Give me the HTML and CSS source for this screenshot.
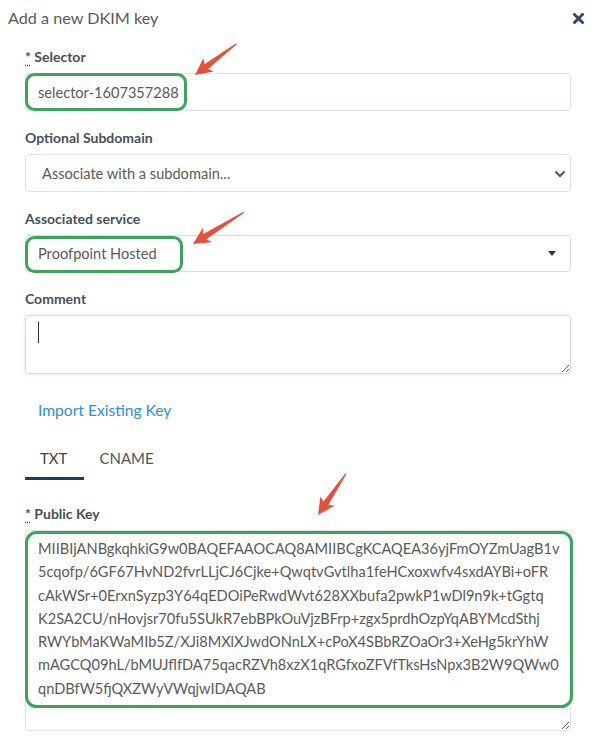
FILE: index.html
```html
<!DOCTYPE html>
<html lang="en">
<head>
<meta charset="utf-8">
<title>Add a new DKIM key</title>
<link rel="stylesheet" href="styles.css">
</head>
<body>
<div class="modal">
  <div class="modal-header">
    <h4 class="modal-title">Add a new DKIM key</h4>
    <button class="close" type="button" aria-label="Close">
      <svg width="11" height="11" viewBox="0 0 11 11"><path d="M1.5 1.5 L9.5 9.5 M9.5 1.5 L1.5 9.5" stroke="#34495e" stroke-width="2.8" stroke-linecap="square"/></svg>
    </button>
  </div>
  <form class="modal-body">
    <div class="field">
      <label class="label"><abbr title="required">*</abbr> Selector</label>
      <input class="control" type="text" value="selector-1607357288">
    </div>
    <div class="field">
      <label class="label">Optional Subdomain</label>
      <div class="select-wrap">
        <select class="control select">
          <option>Associate with a subdomain...</option>
        </select>
        <svg class="chevron" width="12" height="8" viewBox="0 0 12 8"><path d="M1.5 1.5 L6 6 L10.5 1.5" fill="none" stroke="#555" stroke-width="2"/></svg>
      </div>
    </div>
    <div class="field">
      <label class="label">Associated service</label>
      <div class="control select2">
        <span class="select2-text">Proofpoint Hosted</span>
        <span class="caret"></span>
      </div>
    </div>
    <div class="field">
      <label class="label">Comment</label>
      <div class="textarea-wrap focused">
        <textarea class="control comment" rows="2"></textarea>
      </div>
    </div>
    <a class="import-link" href="#">Import Existing Key</a>
    <ul class="tabs">
      <li class="tab active">TXT</li>
      <li class="tab">CNAME</li>
    </ul>
    <div class="field">
      <label class="label"><abbr title="required">*</abbr> Public Key</label>
      <textarea class="control key" wrap="off">MIIBIjANBgkqhkiG9w0BAQEFAAOCAQ8AMIIBCgKCAQEA36yjFmOYZmUagB1v
5cqofp/6GF67HvND2fvrLLjCJ6Cjke+QwqtvGvtlha1feHCxoxwfv4sxdAYBi+oFR
cAkWSr+0ErxnSyzp3Y64qEDOiPeRwdWvt628XXbufa2pwkP1wDl9n9k+tGgtq
K2SA2CU/nHovjsr70fu5SUkR7ebBPkOuVjzBFrp+zgx5prdhOzpYqABYMcdSthj
RWYbMaKWaMIb5Z/XJi8MXlXJwdONnLX+cPoX4SBbRZOaOr3+XeHg5krYhW
mAGCQ09hL/bMUJflfDA75qacRZVh8xzX1qRGfxoZFVfTksHsNpx3B2W9QWw0
qnDBfW5fjQXZWyVWqjwIDAQAB</textarea>
    </div>
  </form>
  <svg class="annotations" width="601" height="741" viewBox="0 0 601 741" aria-hidden="true">
    <g fill="none" stroke="#3ca55c" stroke-width="3">
      <rect x="26.5" y="74.5" width="159" height="35" rx="8"/>
      <rect x="26.5" y="237.5" width="155" height="34" rx="8"/>
      <rect x="26.5" y="532.5" width="545" height="174" rx="10"/>
    </g>
    <g fill="#e5503b">
      <polygon transform="translate(195 75) rotate(-37)" points="0,0 17,-8.5 14,-3 52,-0.6 52,0.6 14,3 17,8.5"/>
      <polygon transform="translate(193 244) rotate(-32)" points="0,0 17,-8.5 14,-3 60,-0.6 60,0.6 14,3 17,8.5"/>
      <polygon transform="translate(318 515) rotate(-56)" points="0,0 17,-8.5 14,-3 50,-0.6 50,0.6 14,3 17,8.5"/>
    </g>
  </svg>
</div>
</body>
</html>
```
FILE: styles.css
```css
* { box-sizing: border-box; }
html, body { margin: 0; padding: 0; background: #fff; }
body {
  font-family: "Lato", "Liberation Sans", sans-serif;
  color: #555;
}
.modal { position: relative; width: 601px; height: 741px; overflow: hidden; }
.modal-header {
  height: 36px;
  display: flex;
  align-items: center;
  justify-content: space-between;
  padding: 0 17px 0 8px;
}
.modal-title {
  margin: 0;
  font-size: 16.2px;
  font-weight: 400;
  color: #595959;
  line-height: 36px;
}
.close {
  border: 0;
  background: none;
  padding: 0;
  display: flex;
  align-items: center;
  cursor: pointer;
}
.modal-body { padding: 13px 30px 0 25px; margin: 0; }
.field { margin-bottom: 19px; }
.label {
  display: block;
  font-size: 14px;
  font-weight: 700;
  line-height: 16px;
  color: #45505b;
  margin-bottom: 8px;
}
.label abbr { text-decoration: underline dotted; text-underline-offset: 3px; }
.control {
  display: block;
  width: 100%;
  height: 38px;
  border: 1px solid #dde3ea;
  border-radius: 4px;
  background: #fff;
  font-family: inherit;
  font-size: 14.6px;
  color: #5a5a5a;
  padding: 0 12px;
  margin: 0;
  outline: none;
}
.select-wrap { position: relative; }
.select { appearance: none; -webkit-appearance: none; padding-left: 16px; }
.chevron { position: absolute; right: 5px; top: 16px; pointer-events: none; }
.select2 {
  display: flex;
  align-items: center;
  justify-content: space-between;
  padding: 0 14px 0 12px;
  border-color: #d9dde1;
  height: 37px;
}
.caret {
  width: 0; height: 0;
  border-left: 4px solid transparent;
  border-right: 4px solid transparent;
  border-top: 5px solid #333;
}
.textarea-wrap { position: relative; }
.textarea-wrap.focused::after {
  content: "";
  position: absolute;
  left: 13px;
  top: 7px;
  width: 1px;
  height: 21px;
  background: #333;
}
.comment {
  height: 59px;
  resize: vertical;
  padding: 8px 12px;
  box-shadow: 0 0 4px rgba(160, 180, 200, 0.35);
  border-color: #d6dde5;
}
.import-link {
  display: block;
  margin: 26px 0 19px 13px;
  font-size: 15.6px;
  line-height: 20px;
  color: #2a90e0;
  text-decoration: none;
}
.tabs {
  list-style: none;
  margin: 0 0 26px;
  padding: 0;
  display: flex;
}
.tab {
  font-size: 15px;
  line-height: 20px;
  padding: 9px 15px 9px;
  border-bottom: 3px solid transparent;
  color: #555;
}
.tab.active { border-bottom-color: #183f66; color: #444; padding-right: 17px; }
.key {
  height: 201px;
  resize: vertical;
  padding: 6px 12px;
  line-height: 23.3px;
  overflow: hidden;
  white-space: pre;
}
.annotations { position: absolute; left: 0; top: 0; pointer-events: none; }
```
